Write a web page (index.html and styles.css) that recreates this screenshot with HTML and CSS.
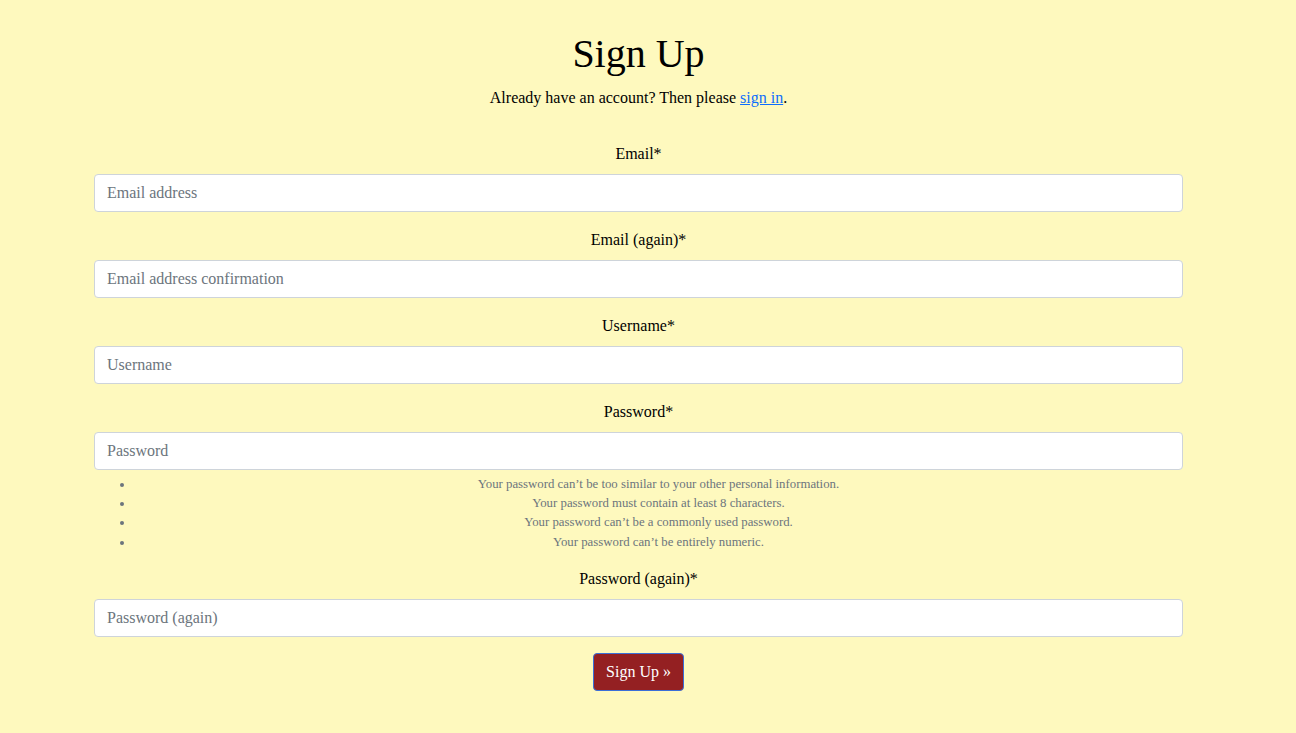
FILE: index.html
```html
<!DOCTYPE html>
<html lang="en">
<head>
<meta charset="utf-8">
<title>Sign Up</title>
<link rel="stylesheet" href="styles.css">
</head>
<body>
<main class="container">
  <h1 class="title">Sign Up</h1>
  <p class="lead-text">Already have an account? Then please <a href="#" class="link">sign in</a>.</p>
  <form class="signup-form">
    <div class="form-group">
      <label class="form-label" for="email">Email*</label>
      <input class="form-control" id="email" type="email" placeholder="Email address">
    </div>
    <div class="form-group">
      <label class="form-label" for="email2">Email (again)*</label>
      <input class="form-control" id="email2" type="email" placeholder="Email address confirmation">
    </div>
    <div class="form-group">
      <label class="form-label" for="username">Username*</label>
      <input class="form-control" id="username" type="text" placeholder="Username">
    </div>
    <div class="form-group">
      <label class="form-label" for="password">Password*</label>
      <input class="form-control" id="password" type="password" placeholder="Password">
      <ul class="help-list">
        <li>Your password can’t be too similar to your other personal information.</li>
        <li>Your password must contain at least 8 characters.</li>
        <li>Your password can’t be a commonly used password.</li>
        <li>Your password can’t be entirely numeric.</li>
      </ul>
    </div>
    <div class="form-group">
      <label class="form-label" for="password2">Password (again)*</label>
      <input class="form-control" id="password2" type="password" placeholder="Password (again)">
    </div>
    <div class="actions">
      <button class="btn-submit" type="submit">Sign Up »</button>
    </div>
  </form>
</main>
</body>
</html>
```
FILE: styles.css
```css
html, body {
  margin: 0;
  padding: 0;
}
body {
  background: #fef9be;
  font-family: "Liberation Serif", "Times New Roman", serif;
  font-size: 16px;
  line-height: 1.5;
  color: #000;
}
.container {
  width: 1089px;
  margin-left: 94px;
  padding-top: 30px;
  text-align: center;
}
.title {
  font-size: 40px;
  font-weight: 400;
  line-height: 1.2;
  margin: 0 0 8px;
}
.lead-text {
  margin: 0 0 32px;
}
.link {
  color: #0d6efd;
  text-decoration: underline;
}
.signup-form {
  display: flex;
  flex-direction: column;
}
.form-group {
  display: flex;
  flex-direction: column;
  margin-bottom: 16px;
}
.form-label {
  display: block;
  margin-bottom: 8px;
}
.form-control {
  box-sizing: border-box;
  width: 100%;
  height: 38px;
  padding: 6px 12px;
  font-family: "Liberation Serif", "Times New Roman", serif;
  font-size: 16px;
  line-height: 1.5;
  color: #212529;
  background: #fff;
  border: 1px solid #ced4da;
  border-radius: 4px;
  outline: none;
}
.form-control::placeholder {
  color: #6c757d;
  opacity: 1;
}
.help-list {
  margin: 5px 0 -1px;
  padding-left: 40px;
  color: #6c757d;
  font-size: 12.8px;
  line-height: 1.5;
}
.help-list li {
  text-align: center;
}
.actions {
  display: flex;
  justify-content: center;
}
.btn-submit {
  height: 38px;
  padding: 6px 12px;
  font-family: "Liberation Serif", "Times New Roman", serif;
  font-size: 16px;
  line-height: 1.5;
  color: #fff;
  background: #942022;
  border: 1px solid #3a6fd8;
  border-radius: 4px;
  cursor: pointer;
}
```
